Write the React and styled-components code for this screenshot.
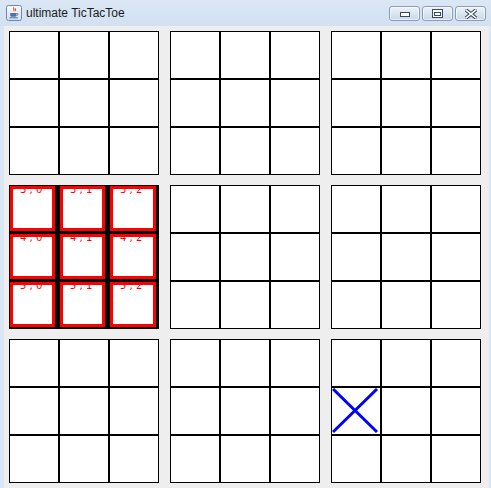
import React from 'react';
import styled, { createGlobalStyle } from 'styled-components';

const GlobalStyle = createGlobalStyle`
  html, body {
    margin: 0;
    padding: 0;
    background: #eeeeee;
  }
  * {
    box-sizing: border-box;
  }
`;

const Window = styled.div`
  width: 491px;
  height: 488px;
  display: flex;
  flex-direction: column;
  background: #dae6f4;
  overflow: hidden;
`;

const TitleBar = styled.div`
  height: 26px;
  display: flex;
  align-items: center;
  padding: 0 5px 0 6px;
  background: linear-gradient(#dbe7f5, #d2e0f0);
`;

const Title = styled.span`
  margin-left: 4px;
  font-family: 'Liberation Sans', Arial, sans-serif;
  font-size: 12px;
  color: #1b1b1b;
  line-height: 1;
`;

const Controls = styled.div`
  margin-left: auto;
  display: flex;
  gap: 2px;
  margin-top: 1px;
`;

const CtrlButton = styled.div`
  width: ${(p) => p.$w || 31}px;
  height: 15px;
  border: 1px solid #8a9bb4;
  border-radius: 3px;
  background: linear-gradient(#eef3fa, #dbe5f2 50%, #cbd8ea);
  box-shadow: inset 0 0 0 1px rgba(255, 255, 255, 0.6);
  display: flex;
  align-items: center;
  justify-content: center;
`;

const Body = styled.div`
  flex: 1;
  display: flex;
  background: #eeeeee;
  border-left: 4px solid #dae6f4;
  border-right: 2px solid #dae6f4;
  padding: 5px 0 0 5px;
`;

const BoardGrid = styled.div`
  display: grid;
  grid-template-columns: repeat(3, 150px);
  grid-auto-rows: 144px;
  column-gap: 11px;
  row-gap: 10px;
  align-content: start;
`;

const Board = styled.div`
  display: grid;
  grid-template-columns: repeat(3, 50px);
  grid-template-rows: repeat(3, 48px);
`;

const Cell = styled.div`
  position: relative;
  border: 1px solid #000;
  background: ${(p) => (p.$active ? '#000' : '#fff')};
`;

const Highlight = styled.div`
  width: ${(p) => p.$w}px;
  height: ${(p) => p.$h}px;
  border: 3px solid #ff0000;
  background: #fff;
  overflow: hidden;
  padding-left: 7px;
`;

const Label = styled.div`
  margin-top: -4px;
  font-family: 'DejaVu Sans', sans-serif;
  font-size: 10px;
  line-height: 10px;
  color: #ff0000;
  white-space: pre;
`;

const Mark = styled.svg`
  position: absolute;
  left: 0;
  top: 0;
  width: 48px;
  height: 46px;
`;

const JavaIcon = () => (
  <svg width="16" height="16" viewBox="0 0 16 16">
    <defs>
      <linearGradient id="jg" x1="0" y1="0" x2="0" y2="1">
        <stop offset="0" stopColor="#f7f9fc" />
        <stop offset="1" stopColor="#d5dfeb" />
      </linearGradient>
    </defs>
    <rect x="0.5" y="0.5" width="15" height="15" rx="2" fill="url(#jg)" stroke="#6d87aa" />
    <path d="M8 2.5c-1.5 1.3 1 2-0.3 3.6M9.6 3.4c-1 0.9 0.8 1.4-0.2 2.6" stroke="#e2571e" strokeWidth="1.1" fill="none" />
    <path d="M4.2 8h6.2v2.2c0 1-0.9 1.6-1.9 1.6H6.1c-1 0-1.9-0.6-1.9-1.6z" fill="#4b74a8" />
    <path d="M10.4 8.6h1.1c0.8 0 0.8 1.5 0 1.5h-1.1" stroke="#4b74a8" strokeWidth="0.9" fill="none" />
    <path d="M3.5 12.8h8.4" stroke="#4b74a8" strokeWidth="1" />
  </svg>
);

const MinIcon = () => (
  <svg width="10" height="6" viewBox="0 0 10 6">
    <rect x="0.5" y="1.5" width="9" height="4" fill="#fff" stroke="#3c4a5e" />
  </svg>
);

const MaxIcon = () => (
  <svg width="11" height="9" viewBox="0 0 11 9">
    <rect x="0.5" y="0.5" width="10" height="8" fill="#fff" stroke="#3c4a5e" />
    <rect x="2.5" y="3.5" width="6" height="3" fill="#fff" stroke="#3c4a5e" />
  </svg>
);

const CloseIcon = () => (
  <svg width="12" height="10" viewBox="0 0 12 10">
    <path d="M1 1l10 8M11 1l-10 8" stroke="#3c4a5e" strokeWidth="3.6" strokeLinecap="square" />
    <path d="M1 1l10 8M11 1l-10 8" stroke="#fff" strokeWidth="1.6" strokeLinecap="square" />
  </svg>
);

// board 3 (middle-left) is the active one, board 8 has an X in row 1 col 0
const ACTIVE_BOARD = 3;
const MARKS = { '8-3': 'X' };

const SmallBoard = ({ index }) => {
  const bRow = Math.floor(index / 3);
  const bCol = index % 3;
  const active = index === ACTIVE_BOARD;
  return (
    <Board>
      {Array.from({ length: 9 }, (_, i) => {
        const lr = Math.floor(i / 3);
        const lc = i % 3;
        const r = bRow * 3 + lr;
        const mark = MARKS[`${index}-${i}`];
        return (
          <Cell key={i} $active={active}>
            {active && (
              <Highlight $w={lc === 2 ? 46 : 45} $h={lr === 2 ? 45 : 45}>
                <Label>{`${r} , ${lc}`}</Label>
              </Highlight>
            )}
            {mark === 'X' && (
              <Mark viewBox="0 0 48 46">
                <path d="M1 1L45 44M1 44L45 1" stroke="#0000ff" strokeWidth="3" />
              </Mark>
            )}
          </Cell>
        );
      })}
    </Board>
  );
};

export default function App() {
  return (
    <>
      <GlobalStyle />
      <Window>
        <TitleBar>
          <JavaIcon />
          <Title>ultimate TicTacToe</Title>
          <Controls>
            <CtrlButton>
              <MinIcon />
            </CtrlButton>
            <CtrlButton>
              <MaxIcon />
            </CtrlButton>
            <CtrlButton $w={31}>
              <CloseIcon />
            </CtrlButton>
          </Controls>
        </TitleBar>
        <Body>
          <BoardGrid>
            {Array.from({ length: 9 }, (_, i) => (
              <SmallBoard key={i} index={i} />
            ))}
          </BoardGrid>
        </Body>
      </Window>
    </>
  );
}
